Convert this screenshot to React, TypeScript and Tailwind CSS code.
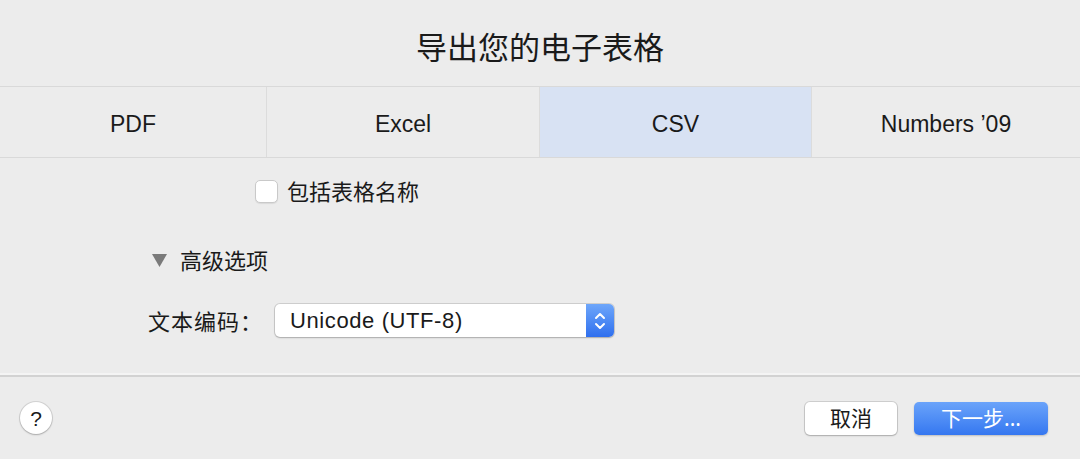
import React from "react";

const font = { fontFamily: '"Noto Sans", "Noto Sans CJK SC", sans-serif' };
const latin = { fontFamily: '"Liberation Sans", "Noto Sans CJK SC", sans-serif' };

export default function App() {
  const tabs = ["PDF", "Excel", "CSV", "Numbers ’09"];
  return (
    <div
      className="w-[1080px] h-[459px] bg-[#ececec] flex flex-col text-[#1a1a1a] overflow-hidden"
      style={font}
    >
      {/* Title */}
      <div className="h-[86px] flex items-center justify-center pt-[9px]">
        <span className="text-[31px] leading-none">导出您的电子表格</span>
      </div>

      {/* Tabs */}
      <div className="h-[72px] border-y border-[#d9d9d9] grid grid-cols-[266px_273px_272px_1fr]">
        {tabs.map((t, i) => (
          <div
            key={t}
            style={latin}
            className={
              "flex items-center justify-center pt-[4px] text-[23px] " +
              (i > 0 ? "border-l border-[#dcdcdc] " : "") +
              (t === "CSV" ? "bg-[#d8e2f3]" : "")
            }
          >
            {t}
          </div>
        ))}
      </div>

      {/* Body */}
      <div className="flex flex-col pt-[21px] h-[215px]">
        <div className="flex items-center pl-[255px] h-[24px]">
          <div className="w-[23px] h-[23px] bg-white rounded-[5px] border border-[#c9c9c9] shadow-[0_1px_1px_rgba(0,0,0,0.08)]" />
          <span className="ml-[9px] text-[22px] leading-none">包括表格名称</span>
        </div>

        <div className="flex items-center pl-[152px] h-[24px] mt-[45px]">
          <svg width="15" height="13" viewBox="0 0 15 13">
            <polygon points="0,0 15,0 7.5,13" fill="#7a7a7a" />
          </svg>
          <span className="ml-[13px] text-[22px] leading-none">高级选项</span>
        </div>

        <div className="flex items-center pl-[148px] mt-[32px] h-[33px]">
          <span className="text-[22px] leading-none w-[127px] tracking-[1px]">文本编码：</span>
          <div className="w-[339px] h-[33px] flex bg-white rounded-[5px] shadow-[0_0_0_1px_rgba(0,0,0,0.12),0_1px_2px_rgba(0,0,0,0.18)] overflow-hidden">
            <div className="flex-1 flex items-center pl-[15px] text-[22px] tracking-[0.6px]" style={latin}>
              Unicode (UTF-8)
            </div>
            <div className="w-[28px] h-full bg-gradient-to-b from-[#6ea6fa] to-[#2f6fee] flex items-center justify-center">
              <svg width="14" height="22" viewBox="0 0 14 22" fill="none" stroke="white" strokeWidth="2" strokeLinecap="round" strokeLinejoin="round">
                <polyline points="3,8 7,4 11,8" />
                <polyline points="3,14 7,18 11,14" />
              </svg>
            </div>
          </div>
        </div>
      </div>

      {/* Separator */}
      <div className="h-[2px] bg-[#f4f4f4]" />
      <div className="h-[2px] bg-[#d2d2d2]" />

      {/* Footer */}
      <div className="flex items-start justify-between pt-[25px] pl-[20px] pr-[32px]">
        <div
          className="w-[32px] h-[32px] rounded-full bg-white shadow-[0_0_0_1px_rgba(0,0,0,0.1),0_1px_2px_rgba(0,0,0,0.2)] flex items-center justify-center text-[21px] leading-none"
          style={latin}
        >
          ?
        </div>
        <div className="flex gap-[17px]">
          <div className="w-[92px] h-[33px] bg-white rounded-[5px] shadow-[0_0_0_1px_rgba(0,0,0,0.12),0_1px_2px_rgba(0,0,0,0.18)] flex items-center justify-center text-[21px]">
            取消
          </div>
          <div className="w-[134px] h-[33px] rounded-[5px] bg-gradient-to-b from-[#6aa3fa] to-[#3577f0] shadow-[0_1px_2px_rgba(0,0,0,0.2)] flex items-center justify-center text-[21px] text-white">
            下一步...
          </div>
        </div>
      </div>
    </div>
  );
}
